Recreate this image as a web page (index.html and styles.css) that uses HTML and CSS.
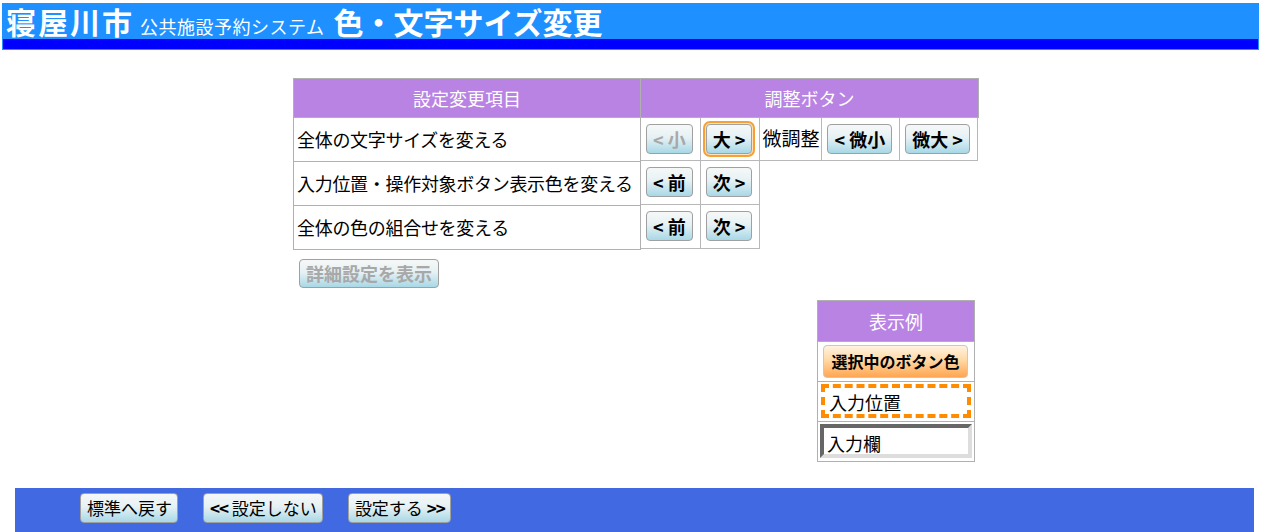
FILE: index.html
```html
<!DOCTYPE html>
<html lang="ja">
<head>
<meta charset="utf-8">
<title>色・文字サイズ変更</title>
<link rel="stylesheet" href="styles.css">
</head>
<body>
<header class="header">
  <div class="header-top">
    <span class="city">寝屋川市</span>
    <span class="system">公共施設予約システム</span>
    <span class="page">色・文字サイズ変更</span>
  </div>
  <div class="header-bar"></div>
</header>

<main class="content">
  <table class="settings">
    <thead>
      <tr>
        <th class="col-item">設定変更項目</th>
        <th class="col-btn">調整ボタン</th>
      </tr>
    </thead>
    <tbody>
      <tr>
        <td class="item">全体の文字サイズを変える</td>
        <td class="controls">
          <div class="ctl-row first">
            <div class="ctl"><button class="btn disabled">&lt; 小</button></div>
            <div class="ctl"><button class="btn focus">大 &gt;</button></div>
            <div class="ctl label">微調整</div>
            <div class="ctl"><button class="btn">&lt; 微小</button></div>
            <div class="ctl"><button class="btn">微大 &gt;</button></div>
          </div>
        </td>
      </tr>
      <tr>
        <td class="item">入力位置・操作対象ボタン表示色を変える</td>
        <td class="controls">
          <div class="ctl-row">
            <div class="ctl"><button class="btn">&lt; 前</button></div>
            <div class="ctl"><button class="btn">次 &gt;</button></div>
          </div>
        </td>
      </tr>
      <tr>
        <td class="item">全体の色の組合せを変える</td>
        <td class="controls">
          <div class="ctl-row">
            <div class="ctl"><button class="btn">&lt; 前</button></div>
            <div class="ctl"><button class="btn">次 &gt;</button></div>
          </div>
        </td>
      </tr>
    </tbody>
  </table>

  <div class="detail-wrap">
    <button class="btn disabled detail">詳細設定を表示</button>
  </div>

  <table class="sample">
    <tr><th>表示例</th></tr>
    <tr><td><button class="btn selected">選択中のボタン色</button></td></tr>
    <tr><td><div class="input-pos">入力位置</div></td></tr>
    <tr><td><div class="input-field">入力欄</div></td></tr>
  </table>
</main>

<footer class="footer">
  <button class="fbtn">標準へ戻す</button>
  <button class="fbtn"><b>&lt;&lt;</b> 設定しない</button>
  <button class="fbtn">設定する <b>&gt;&gt;</b></button>
</footer>
</body>
</html>
```

FILE: styles.css
```css
html, body {
  margin: 0;
  padding: 0;
  background: #fff;
}

body {
  font-family: "Noto Sans CJK JP", "Noto Sans", sans-serif;
  color: #000;
  width: 1262px;
}

/* Header */
.header {
  margin: 3px 3px 0 2px;
  border: 1px solid #1e90ff;
}

.header-top {
  background: #1e90ff;
  height: 35px;
  display: flex;
  align-items: baseline;
  padding-left: 3px;
  color: #fff;
  line-height: 34px;
}

.city {
  font-size: 30px;
  font-weight: bold;
  letter-spacing: 2px;
}

.system {
  font-size: 18px;
  letter-spacing: 0.5px;
  margin-left: 6px;
}

.page {
  font-size: 30px;
  font-weight: bold;
  margin-left: 9px;
}

.header-bar {
  background: #0000ff;
  height: 10px;
}

/* Content */
.content {
  margin: 28px 0 0 293px;
}

.settings {
  border-collapse: collapse;
  font-size: 18px;
}

.settings th {
  background: #b983e3;
  color: #fff;
  font-weight: normal;
  font-size: 18px;
  height: 38px;
  padding: 0;
  border: 1px solid #b0b0b0;
  text-align: center;
}

.col-item {
  width: 346px;
}

.col-btn {
  width: 337px;
}

.item {
  border: 1px solid #b0b0b0;
  padding: 0 0 0 3px;
  height: 20px;
  white-space: nowrap;
  letter-spacing: -0.3px;
}

.controls {
  padding: 0;
  border: none;
  vertical-align: top;
}

.ctl-row {
  display: flex;
}

.ctl {
  flex: none;
  white-space: nowrap;
  box-sizing: border-box;
  border-right: 1px solid #b8b8b8;
  border-bottom: 1px solid #b8b8b8;
  padding: 6px 7px 0 5px;
  height: 44px;
}

.ctl-row.first .ctl {
  height: 43px;
}

.ctl.label {
  padding: 0 2px;
  line-height: 40px;
  font-size: 19px;
}

.btn {
  font-family: "Noto Sans CJK JP", "Noto Sans", sans-serif;
  font-size: 18px;
  font-weight: bold;
  color: #000;
  height: 30px;
  padding: 0 6px;
  border: 1px solid #a0a0a0;
  border-radius: 4px;
  background: linear-gradient(#f6f8f8 0%, #e6f1f4 45%, #a8d8e6 100%);
  line-height: 26px;
  white-space: nowrap;
  cursor: pointer;
}

.btn.disabled {
  color: #a8a8a8;
}

.btn.focus {
  box-shadow: 0 0 0 1px #fde2bd, 0 0 0 3px #f6a035;
}

.detail-wrap {
  margin: 9px 0 0 6px;
}

.btn.detail {
  height: 29px;
  padding: 0 6px;
}

/* Sample box */
.sample {
  border-collapse: collapse;
  margin: 12px 0 0 524px;
  width: 158px;
}

.sample th {
  background: #b983e3;
  color: #fff;
  font-weight: normal;
  font-size: 18px;
  height: 40px;
  padding: 0;
  border: 1px solid #b0b0b0;
}

.sample td {
  border: 1px solid #b0b0b0;
  padding: 2px 2px;
  height: 35px;
}

.btn.selected {
  background: linear-gradient(#fff3e0 0%, #ffd9a6 45%, #ffa650 100%);
  border-color: #c8c8c8;
  width: 145px;
  height: 33px;
  padding: 0;
  margin-left: 3px;
  font-size: 16px;
}

.input-pos {
  border: 4px dashed #ff8c00;
  height: 26px;
  line-height: 28px;
  padding-left: 4px;
  font-size: 18px;
  margin-left: 1px;
  width: 138px;
}

.input-field {
  border-style: solid;
  border-width: 4px;
  border-color: #666 #ddd #ddd #666;
  height: 26px;
  line-height: 30px;
  padding-left: 3px;
  font-size: 18px;
  width: 141px;
}

/* Footer */
.footer {
  margin: 26px 8px 0 15px;
  background: #4169e1;
  height: 46px;
  display: flex;
  align-items: flex-start;
  gap: 25px;
  padding: 5px 0 0 65px;
  box-sizing: border-box;
}

.fbtn {
  font-family: "Noto Sans CJK JP", "Noto Sans", sans-serif;
  font-size: 17px;
  color: #000;
  height: 30px;
  padding: 0 5px 0 6px;
  border: 1px solid #a0a0a0;
  border-radius: 4px;
  background: linear-gradient(#f6f8f8 0%, #e6f1f4 45%, #a8d8e6 100%);
  line-height: 26px;
  white-space: nowrap;
}

.fbtn b {
  letter-spacing: -1px;
}
```
